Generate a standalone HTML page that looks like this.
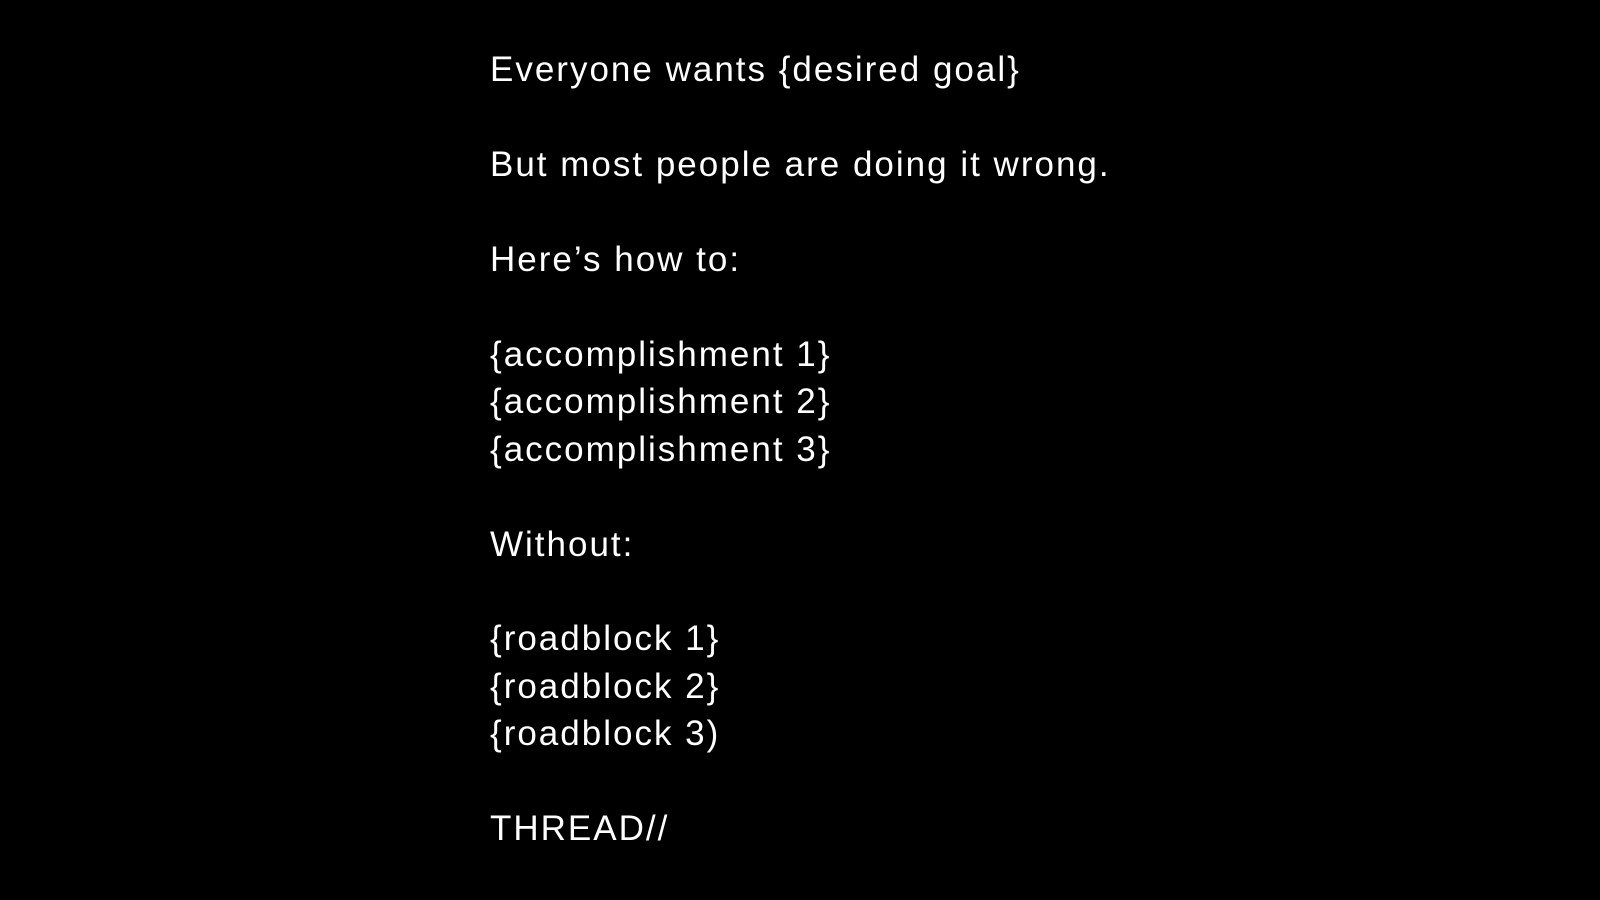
<!DOCTYPE html>
<html><head><meta charset="utf-8"><style>
html,body{margin:0;padding:0;background:#000;width:1600px;height:900px;overflow:hidden}
.t{position:absolute;left:490px;top:46px;color:#fff;font-family:"Liberation Sans",sans-serif;font-size:35px;line-height:47.45px;letter-spacing:2px;white-space:pre}
</style></head><body>
<div class="t">Everyone wants {desired goal}

But most people are doing it wrong.

Here’s how to:

{accomplishment 1}
{accomplishment 2}
{accomplishment 3}

Without:

{roadblock 1}
{roadblock 2}
{roadblock 3)

THREAD//</div>
</body></html>
